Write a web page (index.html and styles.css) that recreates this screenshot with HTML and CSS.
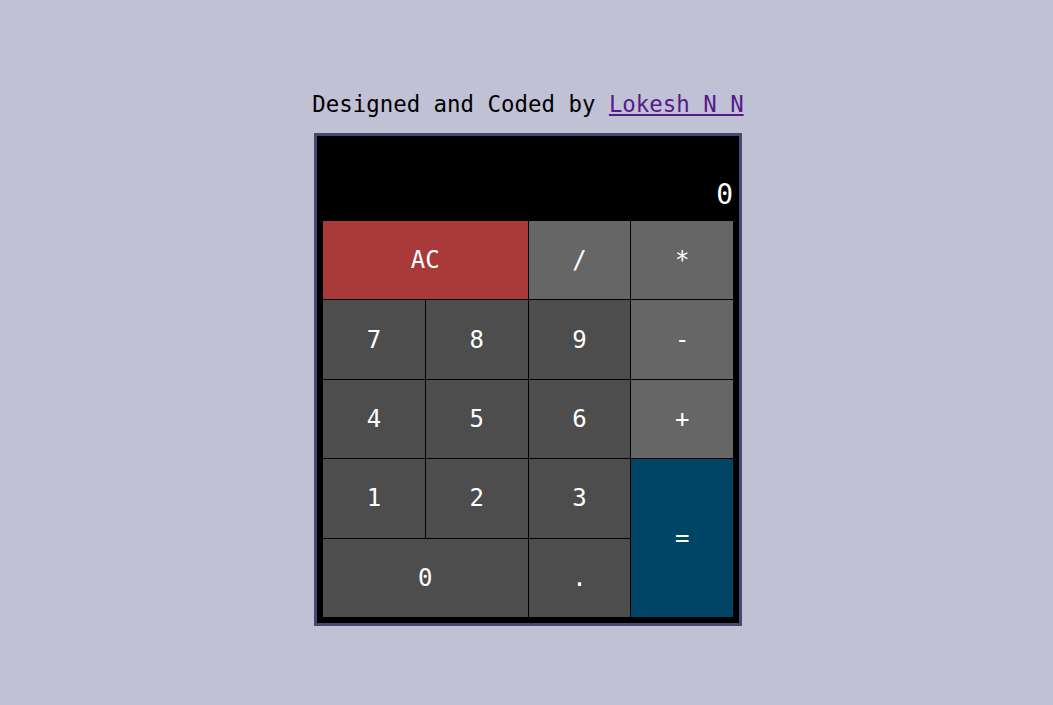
FILE: index.html
```html
<!DOCTYPE html>
<html lang="en">
<head>
<meta charset="utf-8">
<title>Calculator</title>
<link rel="stylesheet" href="styles.css">
</head>
<body>
<div class="page">
  <p class="credit">Designed and Coded by <a href="#" class="author">Lokesh N N</a></p>
  <div class="calculator">
    <div class="display"><span class="value">0</span></div>
    <div class="keys">
      <button class="key clear span-col">AC</button>
      <button class="key op">/</button>
      <button class="key op">*</button>
      <button class="key num">7</button>
      <button class="key num">8</button>
      <button class="key num">9</button>
      <button class="key op">-</button>
      <button class="key num">4</button>
      <button class="key num">5</button>
      <button class="key num">6</button>
      <button class="key op">+</button>
      <button class="key num">1</button>
      <button class="key num">2</button>
      <button class="key num">3</button>
      <button class="key equals span-row">=</button>
      <button class="key num span-col">0</button>
      <button class="key num">.</button>
    </div>
  </div>
</div>
</body>
</html>
```

FILE: styles.css
```css
html, body {
  margin: 0;
  padding: 0;
  background: #c1c1d6;
  height: 100%;
}

.page {
  display: flex;
  flex-direction: column;
  align-items: center;
  padding-top: 91px;
  padding-left: 3px;
  font-family: "DejaVu Sans Mono", "Liberation Mono", monospace;
}

.credit {
  margin: 0 0 15px 0;
  font-size: 22.4px;
  line-height: 27px;
  color: #000;
}

.author {
  color: #551a8b;
  text-decoration: underline;
}

.calculator {
  width: 410px;
  border: 3px solid #4a4870;
  background: #000;
  padding: 0 6px 6px 6px;
}

.display {
  height: 85px;
  padding-top: 6px;
  box-sizing: border-box;
  display: flex;
  justify-content: flex-end;
  align-items: flex-end;
  padding-bottom: 11px;
  color: #fff;
  font-size: 28px;
  line-height: 30px;
}

.keys {
  display: grid;
  grid-template-columns: repeat(4, 1fr);
  grid-template-rows: repeat(5, 1fr);
  gap: 1px;
  height: 396px;
}

.key {
  border: 0;
  margin: 0;
  padding: 0;
  font-family: "DejaVu Sans Mono", "Liberation Mono", monospace;
  font-size: 24px;
  color: #fff;
  background: #4d4d4d;
}

.key.op { background: #666666; }
.key.clear { background: #aa393a; }
.key.equals { background: #004466; }

.span-col { grid-column: span 2; }
.span-row { grid-row: span 2; }
```
